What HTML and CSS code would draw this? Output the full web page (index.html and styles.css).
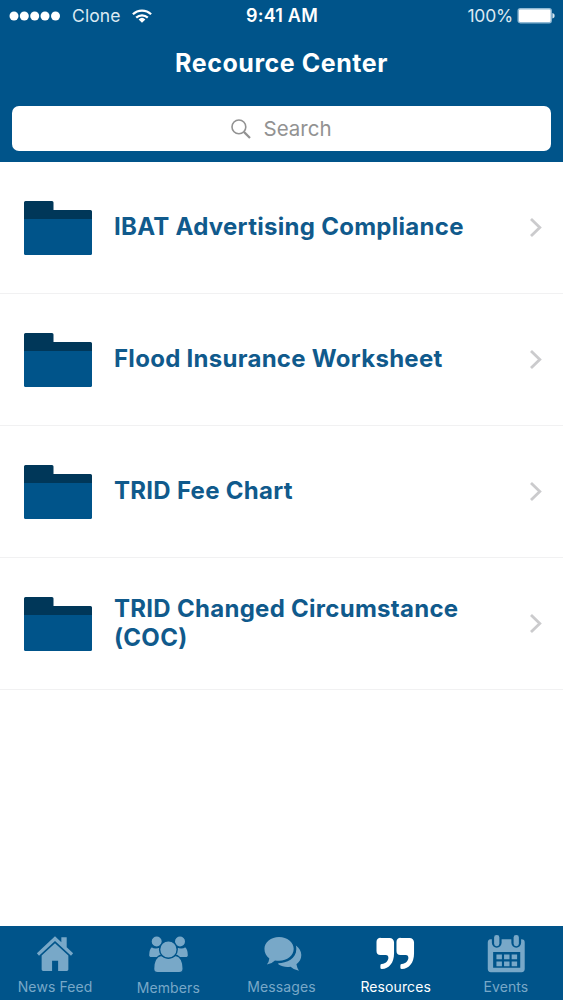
FILE: index.html
```
<!DOCTYPE html>
<html lang="en">
<head>
<meta charset="utf-8">
<title>Recource Center</title>
<link rel="stylesheet" href="styles.css">
</head>
<body>

<svg class="defs" width="0" height="0">
  <symbol id="folder" viewBox="0 0 68 54">
    <path fill="#003759" d="M1.500 0H28a1.500 1.500 0 0 1 1.500 1.500V9H66.500a1.500 1.500 0 0 1 1.500 1.500V20H0V1.500A1.500 1.500 0 0 1 1.500 0z"/>
    <path fill="#00548a" d="M0 18H68V52.500a1.500 1.500 0 0 1-1.500 1.500H1.500A1.500 1.500 0 0 1 0 52.500z"/>
  </symbol>
  <symbol id="chevron" viewBox="0 0 14 20">
    <path fill="none" stroke="#cbcbcd" stroke-width="2.800" d="M2 1L10.800 9.500L2 18"/>
  </symbol>
</svg>

<div class="header">
  <div class="status">
    <div class="carrier">
      <svg width="52" height="10" viewBox="0 0 52 10" fill="#fff">
        <circle cx="5" cy="5" r="4.500"/><circle cx="15.300" cy="5" r="4.500"/><circle cx="25.700" cy="5" r="4.500"/><circle cx="36" cy="5" r="4.500"/><circle cx="46.500" cy="5" r="4.500"/>
      </svg>
      <span class="network">Clone</span>
      <svg width="20" height="14" viewBox="0 0 20 14">
        <g fill="none" stroke="#fff" stroke-width="2.200">
          <path d="M.9 5.300a13 13 0 0 1 18.200 0"/>
          <path d="M4.200 8.600a8.400 8.400 0 0 1 11.600 0"/>
        </g>
        <path fill="#fff" d="M6.600 10.400a5 5 0 0 1 6.800 0L10 13.800z"/>
      </svg>
    </div>
    <div class="time">9:41 AM</div>
    <div class="power">
      <span>100%</span>
      <svg width="38" height="16" viewBox="0 0 38 16">
        <rect x="1.200" y=".7" width="33" height="14" rx="2" fill="#fff" stroke="#8fb9d4" stroke-width="1.400"/>
        <path fill="#d5e5ef" d="M35.400 5c1.700.4 2.200 1.400 2.200 2.700s-.5 2.300-2.200 2.700z"/>
      </svg>
    </div>
  </div>
  <h1>Recource Center</h1>
  <div class="search">
    <svg width="20" height="20" viewBox="0 0 20 20" fill="none" stroke="#929292">
      <circle cx="7.900" cy="7.900" r="6.900" stroke-width="1.600"/>
      <path stroke-width="2.200" d="M12.900 12.900L19 19"/>
    </svg>
    <span>Search</span>
  </div>
</div>

<ul class="list">
  <li>
    <svg class="folder"><use href="#folder"/></svg>
    <span class="name">IBAT Advertising Compliance</span>
    <svg class="chevron"><use href="#chevron"/></svg>
  </li>
  <li>
    <svg class="folder"><use href="#folder"/></svg>
    <span class="name">Flood Insurance Worksheet</span>
    <svg class="chevron"><use href="#chevron"/></svg>
  </li>
  <li>
    <svg class="folder"><use href="#folder"/></svg>
    <span class="name">TRID Fee Chart</span>
    <svg class="chevron"><use href="#chevron"/></svg>
  </li>
  <li>
    <svg class="folder"><use href="#folder"/></svg>
    <span class="name">TRID Changed Circumstance (COC)</span>
    <svg class="chevron"><use href="#chevron"/></svg>
  </li>
</ul>

<div class="tabs">
  <a class="tab home">
    <svg width="40" height="40" viewBox="0 0 40 40" fill="currentColor">
      <path d="M20 2.300L26.500 8.400V3.300H32V13.600L38.600 19.800L36.400 22.200L20 7.200L3.600 22.200L1.400 19.800z"/>
      <path d="M20 9.500L33.700 22V36.500a1.500 1.500 0 0 1-1.500 1.500H23.200V27.500H17V38H7.800a1.500 1.500 0 0 1-1.500-1.500V22z"/>
    </svg>
    <span>News Feed</span>
  </a>
  <a class="tab">
    <svg class="members" width="40" height="40" viewBox="0 0 40 40" fill="currentColor">
      <path d="M3.500 12.500Q8 15.300 11.600 12.500L15 22.500L12 23.700H3a2.500 2.500 0 0 1-2.500-2.500C.5 17.500 1.500 14.200 3.500 12.500z"/>
      <path d="M37.500 12.500Q33 15.300 29.400 12.500L26 22.500L29 23.700H38a2.500 2.500 0 0 0 2.500-2.500C40.500 17.500 39.500 14.200 37.500 12.500z"/>
      <circle cx="8.700" cy="7.500" r="5.700"/>
      <circle cx="32" cy="7.500" r="5.700"/>
      <path d="M13.300 21.300Q20.400 26.500 27.500 21.300C32.500 22.300 35.200 28 35.200 34.800a4 4 0 0 1-4 4H9.600a4 4 0 0 1-4-4C5.600 28 8.300 22.300 13.300 21.300z"/>
      <circle cx="20.400" cy="15.500" r="8.800"/>
    </svg>
    <span>Members</span>
  </a>
  <a class="tab messages">
    <svg width="40" height="40" viewBox="0 0 40 40" fill="currentColor">
      <path d="M17 3C25.400 3 32 8.300 32 15.200S25.400 27.500 17 27.500q-2.200 0-4.200-.4Q9.500 30.600 4.500 31.300Q6.700 28.500 7 25.100C3.800 22.900 2 19.300 2 15.200C2 8.300 8.600 3 17 3z"/>
      <path d="M34.200 11.800C37.700 14.300 39.800 17.600 39.800 21.500C39.800 25.600 38 28.600 34.800 30.900Q35.500 34.800 37.400 37.700Q31.800 36.600 28.800 33.500C24.500 34.200 20 33.600 16.500 31.300L16 30C25 30 34.700 25.500 34.700 15.500Q34.700 13.600 34.200 11.800z"/>
    </svg>
    <span>Messages</span>
  </a>
  <a class="tab active">
    <svg width="40" height="40" viewBox="0 0 40 40" fill="currentColor">
      <path id="quote" d="M4.500 4H13.500a4.500 4.500 0 0 1 4.500 4.500V20C18 29.500 13 35.500 5.500 36a1.500 1.500 0 0 1-1.500-1.500V32.300a1.500 1.500 0 0 1 1.500-1.500C9.500 30 12 27.500 12.200 24.500C12.200 22.500 11.500 21.500 9.500 21.500H4A4 4 0 0 1 0 17.500V8a4 4 0 0 1 4.500-4z"/>
      <use href="#quote" x="20.500"/>
    </svg>
    <span>Resources</span>
  </a>
  <a class="tab events">
    <svg width="40" height="40" viewBox="0 0 40 40" fill="currentColor">
      <path fill-rule="evenodd" d="M4 5.500H5.500V9a5 5 0 0 0 10 0V5.500H25.500V9a5 5 0 0 0 10 0V5.500H36a3.200 3.200 0 0 1 3.200 3.200V36a3.200 3.200 0 0 1-3.200 3.200H4.500A3.200 3.200 0 0 1 1.300 36V8.700A3.200 3.200 0 0 1 4 5.500zM6.800 18.500V34.500H34.600V18.500z"/>
      <rect x="7.800" y="1" width="5.400" height="11.500" rx="2.500"/>
      <rect x="27.800" y="1" width="5.400" height="11.500" rx="2.500"/>
      <path d="M10.200 21h5.600v4.800h-5.600zM18 21h5.600v4.800h-5.600zM25.800 21h5.600v4.800h-5.600zM10.200 28.200h5.600v4.800h-5.600zM18 28.200h5.600v4.800h-5.600zM25.800 28.200h5.600v4.800h-5.600z"/>
    </svg>
    <span>Events</span>
  </a>
</div>

</body>
</html>
```
FILE: styles.css
```
* { box-sizing: border-box; }
body {
  margin: 0;
  height: 1000px;
  display: flex;
  flex-direction: column;
  background: #fff;
  font-family: Inter, "Liberation Sans", sans-serif;
}
.defs { display: none; }

.header { height: 162px; background: #00548a; color: #fff; }
.status {
  display: grid;
  grid-template-columns: 1fr auto 1fr;
  align-items: center;
  height: 31px;
  padding: 0 8px 0 9px;
  font-size: 17.500px;
}
.carrier { display: flex; align-items: center; }
.network { margin: 0 11px; letter-spacing: .1px; color: #dbe9f2; }
.time { font-weight: 600; font-size: 18px; letter-spacing: .2px; }
.power { display: flex; align-items: center; justify-content: flex-end; gap: 4px; letter-spacing: -.2px; color: #dbe9f2; }
h1 {
  margin: 0;
  height: 63px;
  line-height: 64px;
  text-align: center;
  font-size: 25px;
  font-weight: 700;
  letter-spacing: .55px;
}
.search {
  display: flex;
  align-items: center;
  justify-content: center;
  gap: 12px;
  height: 45px;
  margin: 12px 12px 0;
  border-radius: 7px;
  background: #fff;
  color: #929292;
  font-size: 20.500px;
}

.list { flex: 1; margin: 0; padding: 0; list-style: none; }
.list li {
  display: flex;
  align-items: center;
  height: 132px;
  padding: 0 20px 0 24px;
  border-bottom: 1px solid #f1f1f2;
}
.folder { width: 68px; height: 54px; flex: none; }
.name {
  flex: 1;
  margin: 0 40px 0 22px;
  padding-bottom: 2px;
  font-size: 24px;
  font-weight: 700;
  line-height: 29px;
  letter-spacing: .28px;
  color: #105a8c;
}
.chevron { width: 14px; height: 20px; flex: none; }

.tabs { display: flex; height: 74px; background: #00548a; }
.tab {
  flex: 1;
  display: flex;
  flex-direction: column;
  align-items: center;
  padding: 8px 0 0 2px;
  font-size: 14px;
  line-height: 27px;
  letter-spacing: .1px;
  color: #78a8c8;
}
.tab.home { padding: 8px 1px 0 0; }
.tab.messages { padding-left: 3px; }
.tab.active { padding-left: 4px; color: #fff; }
.tab.events { padding: 8px 2px 0 0; }
/* bar-coloured outline keeps the overlapping figures apart */
.members { stroke: #00548a; stroke-width: 1.400px; overflow: visible; }
```
